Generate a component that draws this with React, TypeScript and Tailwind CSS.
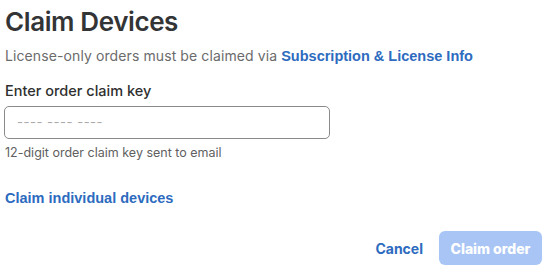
import React from "react";

export default function App() {
  return (
    <div className="w-[550px] h-[272px] bg-white overflow-hidden flex flex-col pl-[5px] pr-[8px]" style={{ fontFamily: "Inter, 'Noto Sans', sans-serif" }}>
      <h1 className="text-[26px] leading-[32px] pt-[6px] font-semibold text-[#333436] tracking-[-0.4px]">Claim Devices</h1>
      <p className="mt-[8px] text-[14px] leading-[20px] text-[#6b6b6b] tracking-[0.1px]">
        License-only orders must be claimed via{" "}
        <a className="font-bold text-[#2d6bbf] text-[14.5px] tracking-normal" style={{ fontFamily: "'Liberation Sans', Arial, sans-serif" }}>Subscription &amp; License Info</a>
      </p>
      <label className="block mt-[15px] text-[14.5px] leading-[20px] font-medium text-[#2f2f2f]">Enter order claim key</label>
      <div className="mt-[5px] w-[326px] h-[33px] -ml-[1px] border-[1.5px] border-[#8a8a8a] rounded-[5px] flex items-center px-[12px]">
        <span className="text-[13px] text-[#ababab] tracking-[0.5px]">---- ---- ----</span>
      </div>
      <p className="mt-[6px] text-[12.5px] leading-[16px] text-[#5f5f5f]">12-digit order claim key sent to email</p>
      <a className="block mt-[28px] text-[14.5px] leading-[18px] font-bold text-[#2d6bbf]" style={{ fontFamily: "'Liberation Sans', Arial, sans-serif" }}>Claim individual devices</a>
      <div className="mt-[24px] flex items-center justify-end gap-[16px]">
        <span className="text-[14px] font-bold text-[#2d6bbf]">Cancel</span>
        <button className="w-[103px] h-[34px] rounded-[6px] bg-[#a9c5f5] text-white text-[14px] font-extrabold">Claim order</button>
      </div>
    </div>
  );
}
